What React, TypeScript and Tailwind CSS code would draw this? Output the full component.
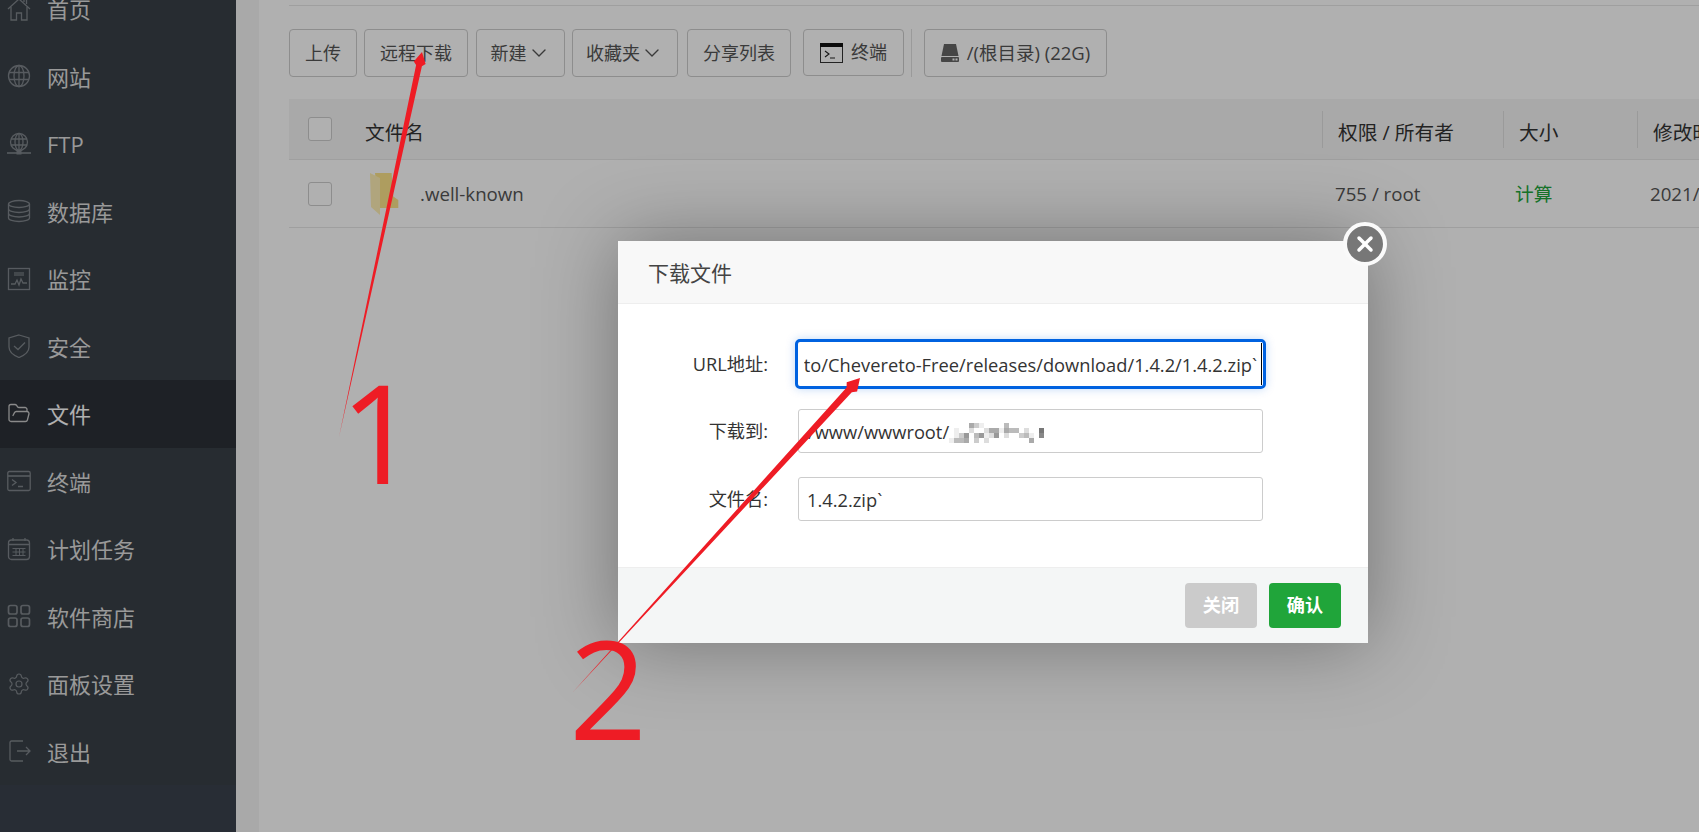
import { ChevronDown, FolderOpen, Settings, X } from "lucide-react";
import type { ReactNode } from "react";

const Ico = ({ children }: { children: ReactNode }) => (
  <svg viewBox="0 0 24 24" fill="none" stroke="currentColor" strokeWidth={1.3} className="h-[24px] w-[24px]">
    {children}
  </svg>
);

const HomeIcon = () => (
  <Ico>
    <path d="M1 12 12 2l11 10" />
    <path d="M4 10v13h5.5v-7h5v7H20V10" />
    <path d="M17 5V2h2.5v5" />
  </Ico>
);

const GlobeIcon = () => (
  <Ico>
    <circle cx="12" cy="12" r="10.5" />
    <ellipse cx="12" cy="12" rx="5" ry="10.5" />
    <path d="M12 1.5v21M2 8.5h20M2 15.5h20" />
  </Ico>
);

const FtpIcon = () => (
  <Ico>
    <circle cx="12" cy="10" r="8.5" />
    <ellipse cx="12" cy="10" rx="4" ry="8.5" />
    <path d="M12 1.5v17M4 7h16M4 13h16" />
    <path d="M0 21h24" strokeWidth={1.6} />
    <rect x="9.5" y="18.5" width="5" height="4" fill="currentColor" stroke="none" />
  </Ico>
);

const DatabaseIcon = () => (
  <Ico>
    <ellipse cx="12" cy="5" rx="10.5" ry="3.5" />
    <path d="M1.5 5v14c0 1.900 4.700 3.500 10.500 3.500S22.500 20.900 22.500 19V5" />
    <path d="M1.500 10c0 1.900 4.700 3.500 10.500 3.500s10.500-1.600 10.500-3.500M1.500 14.500c0 1.900 4.700 3.500 10.500 3.500s10.500-1.600 10.500-3.500" />
  </Ico>
);

const MonitorIcon = () => (
  <Ico>
    <rect x="1.5" y="1.5" width="21" height="21" />
    <rect x="7" y="5" width="10" height="4" fill="currentColor" fillOpacity={0.6} stroke="none" />
    <path d="M4 17h4l2-4 2 5 2-6 2 4h4" />
  </Ico>
);

const ShieldIcon = () => (
  <Ico>
    <path d="M12 1 22 4v9c0 5-5 8.500-10 10.500C7 21.500 2 18 2 13V4z" />
    <path d="m7 12 4 3.500 7-7" />
  </Ico>
);

const TermIcon = () => (
  <Ico>
    <rect x="0.8" y="2.5" width="22.4" height="19" rx="1.5" />
    <path d="M0.8 7h22.4" strokeWidth={1.6} />
    <path d="m5 10.5 4 3-4 3M11 17.5h5" />
  </Ico>
);

const CalendarIcon = () => (
  <Ico>
    <rect x="1.5" y="3" width="21" height="19.5" rx="3" />
    <path d="M6 1v3M18 1v3M1.5 7.5h21" />
    <path d="M5.5 11.5h13M5.5 15h13M5.5 18.5h13M9 11v8M12.500 11v8M16 11v8" strokeWidth={1} />
  </Ico>
);

const AppsIcon = () => (
  <svg viewBox="0 0 24 24" fill="none" stroke="currentColor" strokeWidth={1.7} className="h-[24px] w-[24px]">
    <rect x="1.500" y="1.500" width="8.500" height="8.500" rx="2" />
    <rect x="14" y="1.500" width="8.500" height="8.500" rx="2" />
    <rect x="1.500" y="14" width="8.500" height="8.500" rx="2" />
    <rect x="14" y="14" width="8.500" height="8.500" rx="2" />
  </svg>
);

const LogoutIcon = () => (
  <Ico>
    <path d="M16 2H4.500a1.500 1.500 0 0 0-1.500 1.500v17A1.500 1.500 0 0 0 4.500 22H16" />
    <path d="M10 12h13M19 8l4 4-4 4" />
  </Ico>
);

const menu = [
  { name: "首页", icon: <HomeIcon /> },
  { name: "网站", icon: <GlobeIcon /> },
  { name: "FTP", icon: <FtpIcon /> },
  { name: "数据库", icon: <DatabaseIcon /> },
  { name: "监控", icon: <MonitorIcon /> },
  { name: "安全", icon: <ShieldIcon /> },
  { name: "文件", icon: <FolderOpen size={25} strokeWidth={1.3} />, active: true },
  { name: "终端", icon: <TermIcon /> },
  { name: "计划任务", icon: <CalendarIcon /> },
  { name: "软件商店", icon: <AppsIcon /> },
  { name: "面板设置", icon: <Settings size={26} strokeWidth={1.2} /> },
  { name: "退出", icon: <LogoutIcon /> },
];

const toolbar = [
  { label: "上传", cls: "w-[68px] mr-[7px]" },
  { label: "远程下载", cls: "w-[104px] mr-[8px]" },
  { label: "新建", cls: "w-[89px] mr-[7px]", caret: true },
  { label: "收藏夹", cls: "w-[106px] mr-[9px]", caret: true },
  { label: "分享列表", cls: "w-[104px] mr-[12px]" },
];

// pixelated part of the path, 5px cells
const mosaic: (string | null)[][] = [
  [null, null, null, null, "#aaa", "#ccc", "#eee", null, null, null, null, "#bbb", null, null, null, null, null, null, null],
  [null, "#eee", null, null, "#ddd", null, null, "#ddd", "#aaa", "#aaa", "#eee", "#aaa", "#bbb", "#bbb", null, "#ddd", null, null, "#777"],
  [null, "#eee", "#ccc", "#999", null, "#bbb", "#999", "#eee", "#ddd", "#999", null, "#ddd", null, null, "#ccc", "#bbb", "#eee", null, "#888"],
  ["#eee", "#bbb", "#bbb", "#aaa", null, "#ccc", null, "#ddd", null, null, null, null, null, null, null, null, "#aaa", null, null],
];

const Mosaic = () => (
  <div className="grid grid-cols-[repeat(19,5px)] auto-rows-[5px] mt-[1px]">
    {mosaic.flat().map((c, i) => (
      <div key={i} style={c ? { backgroundColor: c } : undefined} />
    ))}
  </div>
);

const FolderIcon = () => (
  <svg viewBox="0 0 30 42" className="h-[42px] w-[30px]">
    <path d="M5 0h16.600l1.700 23.600 5 3.400v8H9z" fill="#fce48a" />
    <path d="M0 0l10 5v37L1 34z" fill="#fff0b5" />
  </svg>
);

const Checkbox = () => <div className="h-[24px] w-[24px] rounded-[3px] border border-[#ccc] bg-white" />;

const App = () => {
  return (
    <div className="relative flex h-[832px] w-[1699px] overflow-hidden bg-[#f5f5f5] font-[family-name:'Open_Sans','Noto_Sans_CJK_SC',sans-serif] text-[18px] text-[#555]">
      <aside className="flex h-full w-[236px] shrink-0 flex-col overflow-hidden bg-[#3b424d]">
        <nav className="-mt-[25px] bg-[#394047]">
          {menu.map((m) => (
            <div
              key={m.name}
              className={`flex h-[67.5px] items-center gap-[16px] pl-[7px] text-[22px] ${
                m.active ? "bg-[#2c3138] text-white" : "text-[#dedede]"
              }`}
            >
              <span className={`flex w-[24px] justify-center ${m.active ? "text-[#c8c8c8]" : "text-[#7f858b]"}`}>
                {m.icon}
              </span>
              <span className="pt-[2px]">{m.name}</span>
            </div>
          ))}
        </nav>
      </aside>

      <main className="ml-[23px] w-[1700px] shrink-0 bg-white pl-[30px]">
        <div className="mt-[5px] border-t border-[#e6e6e6]" />

        <div className="mt-[23px] flex h-[48px] items-start">
          {toolbar.map((b) => (
            <button
              key={b.label}
              className={`flex h-[48px] items-center justify-center rounded-[4px] border border-[#ccc] ${b.cls}`}
            >
              {b.label}
              {b.caret && <ChevronDown size={24} strokeWidth={1.4} />}
            </button>
          ))}
          <button className="flex h-[47px] w-[101px] items-center justify-center gap-[8px] rounded-[4px] border border-[#ccc]">
            <svg viewBox="0 0 23 20" className="h-[20px] w-[23px]" fill="none">
              <rect x="0.5" y="0.500" width="22" height="19" fill="#fff" stroke="#333" />
              <rect x="0" y="0" width="23" height="4" fill="#111" />
              <path d="M5 8l4 3-4 3M10 15h5" stroke="#222" strokeWidth="1.100" />
            </svg>
            终端
          </button>
          <div className="mx-[7px] h-[48px] border-l border-[#e0e0e0]" />
          <div className="ml-[5px] flex h-[48px] w-[183px] items-center justify-center gap-[8px] rounded-[4px] border border-[#ccc] text-[18.5px]">
            <svg viewBox="0 0 18 18" className="h-[18px] w-[18px]">
              <path d="M3 0h12l2.500 12H.5z" fill="#666" />
              <rect x="0" y="13" width="18" height="5" rx="1" fill="#666" />
              <rect x="11.500" y="14.500" width="2" height="2" fill="#fff" />
              <rect x="14.500" y="14.500" width="2" height="2" fill="#fff" />
            </svg>
            /(根目录) (22G)
          </div>
        </div>

        <div className="mt-[22px] flex h-[61px] items-center border-b border-[#e6e6e6] bg-[#f5f5f5] text-[19.7px] text-[#333]">
          <div className="ml-[19px]">
            <Checkbox />
          </div>
          <div className="ml-[33px] h-[37px] w-[957px] leading-[44px]">文件名</div>
          <div className="h-[37px] w-[181px] border-l border-[#e0e0e0] pl-[15px] leading-[44px]">权限 / 所有者</div>
          <div className="h-[37px] w-[134px] border-l border-[#e0e0e0] pl-[15px] leading-[44px]">大小</div>
          <div className="h-[37px] border-l border-[#e0e0e0] pl-[15px] leading-[44px]">修改时间</div>
        </div>

        <div className="flex h-[68px] items-center border-b border-[#e6e6e6] pt-[1px] text-[18.7px]">
          <div className="ml-[19px]">
            <Checkbox />
          </div>
          <div className="ml-[38px]">
            <FolderIcon />
          </div>
          <div className="ml-[20px] w-[915px]">.well-known</div>
          <div className="w-[180px]">755 / root</div>
          <div className="w-[135px] text-[#20a53a]">计算</div>
          <div className="whitespace-nowrap">2021/08/12 10:00:00</div>
        </div>
      </main>

      <div className="absolute inset-0 z-10 bg-black/[0.31]" />

      <div className="absolute left-[618px] top-[241px] z-20 flex h-[402px] w-[750px] flex-col rounded-[2px] bg-white text-[18.2px] text-[#333] shadow-[0_0_80px_rgba(0,0,0,0.35)]">
        <div className="flex h-[63px] shrink-0 items-center border-b border-[#eee] bg-[#f8f8f8] pl-[30px] pt-[3px] text-[21px] text-[#444]">
          下载文件
        </div>

        <div className="flex-1 pt-[35px]">
          <div className="flex h-[50px] items-center">
            <div className="w-[150px] pt-[2px] text-right">URL地址:</div>
            <div className="relative ml-[27px] flex h-[50px] w-[471px] items-center rounded-[5px] border-[3px] border-[#0062e0] px-[6px] pt-[2px] text-[18.3px] shadow-[0_0_10px_rgba(0,98,224,0.25)]">
              <div className="flex flex-1 justify-end overflow-hidden whitespace-nowrap">
                https://github.com/Chevereto/Chevereto-Free/releases/download/1.4.2/1.4.2.zip`
              </div>
              <span className="absolute right-[1px] top-[1px] h-[42px] w-[1px] bg-black" />
            </div>
          </div>
          <div className="mt-[20px] flex h-[44px] items-center">
            <div className="w-[150px] pt-[2px] text-right">下载到:</div>
            <div className="ml-[30px] flex h-[44px] w-[465px] items-center rounded-[3px] border border-[#ccc] pl-[9px] pt-[2px] text-[18.3px]">
              /www/wwwroot/
              <Mosaic />
            </div>
          </div>
          <div className="mt-[24px] flex h-[44px] items-center">
            <div className="w-[150px] pt-[2px] text-right">文件名:</div>
            <div className="ml-[30px] flex h-[44px] w-[465px] items-center rounded-[3px] border border-[#ccc] pl-[8px] pt-[2px] text-[18.3px]">
              1.4.2.zip`
            </div>
          </div>
        </div>

        <div className="flex h-[76px] shrink-0 items-center justify-end gap-[12px] border-t border-[#eee] bg-[#f4f6f6] pr-[27px] font-bold text-white">
          <button className="h-[45px] w-[72px] rounded-[4px] bg-[#cbcbcb]">关闭</button>
          <button className="h-[45px] w-[72px] rounded-[4px] bg-[#20a53a]">确认</button>
        </div>

        <div className="absolute -right-[19px] -top-[19px] flex h-[44px] w-[44px] items-center justify-center rounded-full border-[4px] border-[#fafafa] bg-[#777]">
          <X size={24} strokeWidth={3.5} className="text-white" />
        </div>
      </div>

      {/* annotations painted on top of the screenshot */}
      <svg viewBox="0 0 1699 832" className="pointer-events-none absolute inset-0 z-30 h-[832px] w-[1699px]">
        <polygon points="339,437 416.100,65.100 413.800,61.400 422,52 425.600,64 421.900,66.300" fill="#ee1c25" />
        <polygon points="573,692 846.600,387.400 846.700,382.200 860,378 857.100,391.600 851.800,392.200" fill="#ee1c25" />
      </svg>
      <div className="absolute left-[340px] top-[363px] z-30 font-['Open_Sans'] text-[137px] leading-none text-[#ee1c25]">
        1
      </div>
      <div className="absolute left-[569px] top-[619px] z-30 font-['Open_Sans'] text-[137px] leading-none text-[#ee1c25]">
        2
      </div>
    </div>
  );
};

export default App;
